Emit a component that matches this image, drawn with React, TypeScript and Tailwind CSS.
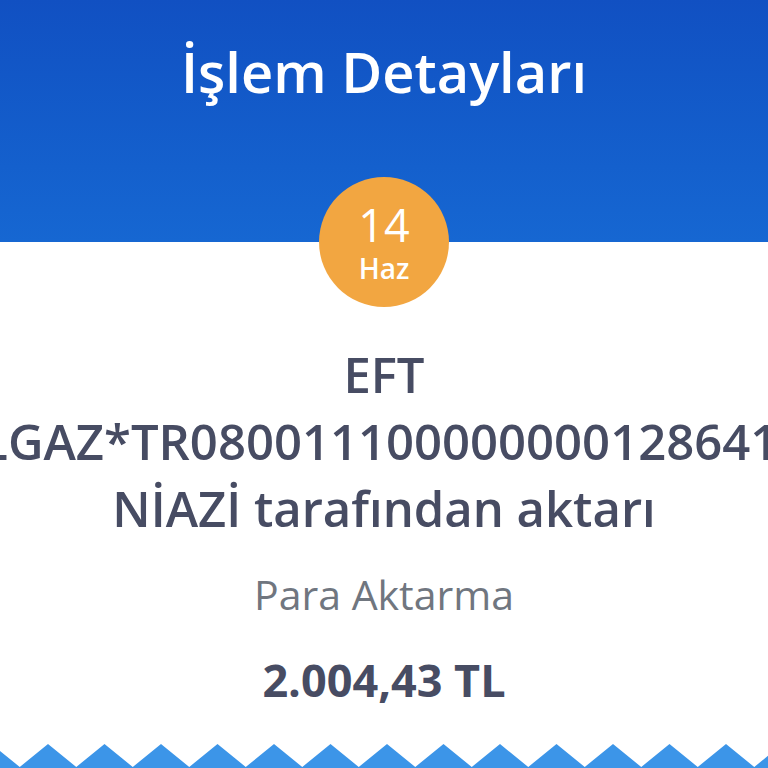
import React from "react";

const ZigZag = () => {
  // bottom edge: blue saw-tooth wave
  const period = 56.5;
  const pts: string[] = [];
  for (let i = -1; i < 16; i++) {
    const peak = 48 + i * period;
    pts.push(`${peak - period / 2},24`);
    pts.push(`${peak},1`);
  }
  return (
    <svg width="768" height="25" viewBox="0 0 768 25" className="block">
      <polygon points={`-40,25 ${pts.join(" ")} 820,25`} fill="#3c95e8" />
    </svg>
  );
};

export default function App() {
  return (
    <div className="w-[768px] h-[768px] overflow-hidden bg-white flex flex-col font-['Open_Sans',sans-serif]">
      {/* Header */}
      <header className="h-[242px] shrink-0 bg-gradient-to-b from-[#1150c2] to-[#1667d2] flex justify-center pt-[43px]">
        <h1 className="text-white text-[56px] leading-none font-semibold h-fit">İşlem Detayları</h1>
      </header>

      {/* Date badge */}
      <div className="-mt-[65px] mx-auto w-[130px] h-[130px] shrink-0 rounded-full bg-[#f2a641] flex flex-col items-center pt-[26px] text-white">
        <span className="text-[45px] leading-[44px]">14</span>
        <span className="text-[28px] leading-[30px] font-semibold mt-[6px]">Haz</span>
      </div>

      {/* Details */}
      <div className="mt-[34px] flex flex-col items-center text-[#474c63] text-[49px] leading-[67px] font-semibold">
        <span>EFT</span>
        <div className="w-full grid grid-cols-[386px_1fr] whitespace-nowrap">
          <span className="flex justify-end overflow-hidden">
            <span className="shrink-0">DOĞALGAZ*TR0800111</span>
          </span>
          <span className="flex justify-start overflow-hidden">
            <span className="shrink-0">00000000128641234</span>
          </span>
        </div>
        <span>NİAZİ tarafından aktarı</span>
      </div>

      <p className="mt-[26px] text-center text-[41px] leading-[52px] text-[#70767f]">Para Aktarma</p>
      <p className="mt-[32px] text-center text-[45px] leading-[56px] font-bold text-[#474c63]">2.004,43 TL</p>

      <div className="mt-auto">
        <ZigZag />
      </div>
    </div>
  );
}
